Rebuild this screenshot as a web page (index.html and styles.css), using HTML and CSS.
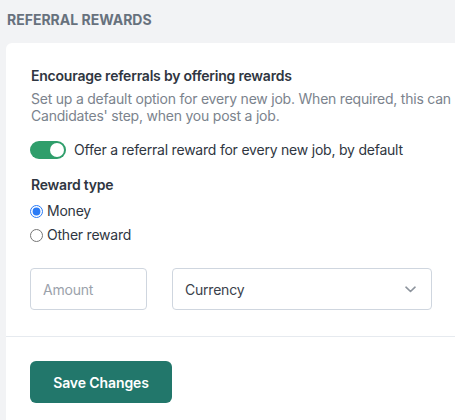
FILE: index.html
```html
<!DOCTYPE html>
<html lang="en">
<head>
  <meta charset="UTF-8">
  <title>Referral rewards</title>
  <link rel="stylesheet" href="styles.css">
</head>
<body>

<h3 class="section-title">Referral Rewards</h3>

<div class="card">
  <div class="card-body">
    <h4 class="card-heading">Encourage referrals by offering rewards</h4>
    <p class="hint">Set up a default option for every new job. When required, this can<br>Candidates' step, when you post a job.</p>

    <label class="switch-row">
      <span class="switch on"><span class="knob"></span></span>
      Offer a referral reward for every new job, by default
    </label>

    <div class="field-label">Reward type</div>
    <label class="radio-row"><input type="radio" name="reward" checked> Money</label>
    <label class="radio-row"><input type="radio" name="reward"> Other reward</label>

    <div class="amount-row">
      <input class="text-input amount" type="text" placeholder="Amount">
      <div class="select-box">
        <span>Currency</span>
        <svg width="11" height="7" viewBox="0 0 11 7"><path d="M1 1.2l4.5 4.3L10 1.2" fill="none" stroke="#8d949d" stroke-width="1.6" stroke-linecap="round" stroke-linejoin="round"/></svg>
      </div>
    </div>
  </div>

  <div class="card-footer">
    <button class="btn-save">Save Changes</button>
  </div>
</div>

</body>
</html>
```

FILE: styles.css
```css
body {
  margin: 0;
  background: #f2f3f5;
  font-family: Inter, "Noto Sans", sans-serif;
  letter-spacing: -0.22px;
  color: #2f3641;
  overflow: hidden;
}

.section-title {
  margin: 0;
  padding: 11px 7px 0;
  height: 43px;
  box-sizing: border-box;
  font-size: 14px;
  font-weight: 700;
  letter-spacing: 0;
  text-transform: uppercase;
  color: #67717d;
}

.card {
  margin-left: 6px;
  width: 720px;
  background: white;
  border-radius: 6px 0 0 0;
}

.card-body {
  padding: 23px 24px 26px;
  border-bottom: 1px solid #e6eaef;
}

.card-heading {
  margin: 0;
  padding-left: 1px;
  font-size: 14px;
  font-weight: 600;
  line-height: 20px;
}

.hint {
  margin: 4px 0 0;
  padding-left: 1px;
  font-size: 14px;
  line-height: 17px;
  color: #7b838d;
}

.switch-row {
  display: flex;
  align-items: center;
  gap: 8px;
  margin-top: 16px;
  font-size: 14px;
  line-height: 20px;
}

.switch {
  width: 36px;
  height: 18px;
  border-radius: 9px;
  background: #2f9e6b;
  display: flex;
  align-items: center;
  justify-content: flex-end;
  padding: 0 2px;
  box-sizing: border-box;
}

.knob {
  width: 14px;
  height: 14px;
  border-radius: 50%;
  background: white;
}

.field-label {
  margin-top: 15px;
  padding-left: 1px;
  font-size: 14px;
  font-weight: 600;
  line-height: 20px;
}

.radio-row {
  display: flex;
  align-items: center;
  gap: 4px;
  margin-top: 6px;
  font-size: 14px;
  line-height: 20px;
}

.radio-row + .radio-row {
  margin-top: 4px;
}

.radio-row input {
  margin: 0;
  width: 13px;
  height: 13px;
  accent-color: #2a7bf6;
}

.amount-row {
  display: flex;
  gap: 25px;
  margin-top: 23px;
}

.text-input,
.select-box {
  height: 42px;
  box-sizing: border-box;
  border: 1px solid #cfd6df;
  border-radius: 4px;
  font-family: inherit;
  font-size: 14px;
  letter-spacing: -0.22px;
}

.amount {
  width: 117px;
  padding: 0 12px;
  color: #2f3641;
}

.amount::placeholder {
  color: #9ba2ab;
}

.select-box {
  width: 260px;
  padding: 0 15px 0 12px;
  display: flex;
  align-items: center;
  justify-content: space-between;
  color: #3a414b;
}

.card-footer {
  padding: 24px 24px 30px;
}

.btn-save {
  width: 142px;
  height: 42px;
  border: none;
  border-radius: 6px;
  background: #22776b;
  color: white;
  font-family: inherit;
  font-size: 14px;
  font-weight: 600;
  letter-spacing: -0.1px;
  cursor: pointer;
}
```
